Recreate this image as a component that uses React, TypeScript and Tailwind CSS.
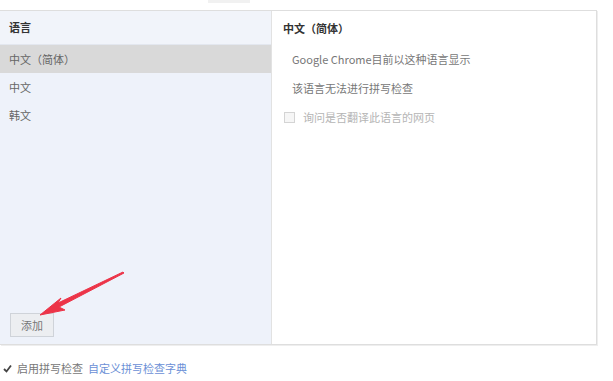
import React from "react";

const languages = ["中文（简体）", "中文", "韩文"];

export default function App() {
  return (
    <div
      className="relative w-[613px] h-[381px] overflow-hidden bg-white text-[11px] text-[#555]"
      style={{ fontFamily: '"Noto Sans CJK SC", "Noto Sans", sans-serif' }}
    >
      {/* faint tab underline at the very top */}
      <div className="absolute left-[208px] top-0 h-[3px] w-[42px] bg-[#f1f1f1]" />

      {/* Language panel */}
      <div className="mt-[10px] flex h-[335px] w-[597px] border-y border-r border-[#dedede] shadow-[1px_1px_0_#eeeeee]">
        <div className="flex w-[271px] flex-col bg-[#eef2fa]">
          <div className="flex h-[34px] items-center border-b border-[#e3e7ef] bg-[#f1f4fa] px-[9px] font-bold text-[#333]">
            语言
          </div>
          {languages.map((lang, i) => (
            <div
              key={lang}
              className={
                i === 0
                  ? "flex h-[28px] items-center bg-[#d9d9d9] px-[9px] text-[#666]"
                  : "flex h-[28px] items-center px-[9px] text-[#666]"
              }
            >
              {lang}
            </div>
          ))}
          <div className="flex-1" />
          <div className="mb-[7px] ml-[10px]">
            <button className="h-[24px] w-[44px] border border-[#cfd3d9] bg-[#eceef1] text-[11px] text-[#777]">
              添加
            </button>
          </div>
        </div>

        <div className="flex-1 border-l border-[#e2e2e2] bg-white">
          <div className="flex h-[34px] items-center pl-[11px] font-bold text-[#333]">
            中文（简体）
          </div>
          <div className="flex h-[29px] items-center pl-[20px] text-[#777]">
            Google Chrome目前以这种语言显示
          </div>
          <div className="flex h-[29px] items-center pl-[20px] text-[#777]">
            该语言无法进行拼写检查
          </div>
          <div className="flex h-[29px] items-center gap-[8px] pl-[12px] text-[#b5b5b5]">
            <span className="h-[11px] w-[11px] border border-[#d4d4d4] bg-[#f6f6f6]" />
            询问是否翻译此语言的网页
          </div>
        </div>
      </div>

      {/* Spell check row */}
      <div className="mt-[15px] flex items-center gap-[5px] pl-[3px]">
        <svg width="9" height="9" viewBox="0 0 9 9">
          <path d="M1 5 L3.5 7.5 L8 1.5" fill="none" stroke="#444" strokeWidth="1.8" />
        </svg>
        <span className="text-[#777]">启用拼写检查</span>
        <span className="text-[#6b8fd6]">自定义拼写检查字典</span>
      </div>

      {/* red annotation arrow */}
      <svg
        className="absolute left-0 top-0"
        width="613"
        height="381"
        viewBox="0 0 613 381"
      >
        <path
          d="M123 272 L58 303 L61 298 L40 315 L65 310 L59 307 L124 273 Z"
          fill="#ec3448"
          stroke="#ec3448"
          strokeWidth="1"
          strokeLinejoin="round"
        />
      </svg>
    </div>
  );
}
